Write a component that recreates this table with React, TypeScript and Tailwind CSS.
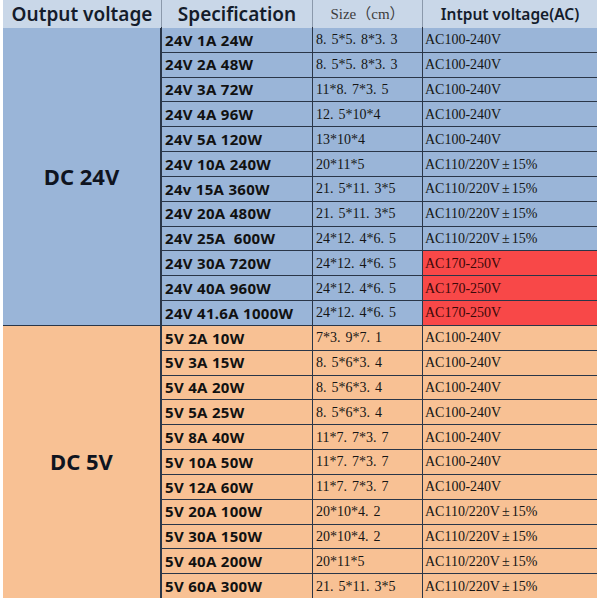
const blueRows = [
  { spec: '24V 1A 24W', size: '8.5*5.8*3.3', input: 'AC100-240V' },
  { spec: '24V 2A 48W', size: '8.5*5.8*3.3', input: 'AC100-240V' },
  { spec: '24V 3A 72W', size: '11*8.7*3.5', input: 'AC100-240V' },
  { spec: '24V 4A 96W', size: '12.5*10*4', input: 'AC100-240V' },
  { spec: '24V 5A 120W', size: '13*10*4', input: 'AC100-240V' },
  { spec: '24V 10A 240W', size: '20*11*5', input: 'AC110/220V±15%' },
  { spec: '24v 15A 360W', size: '21.5*11.3*5', input: 'AC110/220V±15%' },
  { spec: '24V 20A 480W', size: '21.5*11.3*5', input: 'AC110/220V±15%' },
  { spec: '24V 25A  600W', size: '24*12.4*6.5', input: 'AC110/220V±15%' },
  { spec: '24V 30A 720W', size: '24*12.4*6.5', input: 'AC170-250V', red: true },
  { spec: '24V 40A 960W', size: '24*12.4*6.5', input: 'AC170-250V', red: true },
  { spec: '24V 41.6A 1000W', size: '24*12.4*6.5', input: 'AC170-250V', red: true },
];

const orangeRows = [
  { spec: '5V 2A 10W', size: '7*3.9*7.1', input: 'AC100-240V' },
  { spec: '5V 3A 15W', size: '8.5*6*3.4', input: 'AC100-240V' },
  { spec: '5V 4A 20W', size: '8.5*6*3.4', input: 'AC100-240V' },
  { spec: '5V 5A 25W', size: '8.5*6*3.4', input: 'AC100-240V' },
  { spec: '5V 8A 40W', size: '11*7.7*3.7', input: 'AC100-240V' },
  { spec: '5V 10A 50W', size: '11*7.7*3.7', input: 'AC100-240V' },
  { spec: '5V 12A 60W', size: '11*7.7*3.7', input: 'AC100-240V' },
  { spec: '5V 20A 100W', size: '20*10*4.2', input: 'AC110/220V±15%' },
  { spec: '5V 30A 150W', size: '20*10*4.2', input: 'AC110/220V±15%' },
  { spec: '5V 40A 200W', size: '20*11*5', input: 'AC110/220V±15%' },
  { spec: '5V 60A 300W', size: '21.5*11.3*5', input: 'AC110/220V±15%' },
];

const serif = "font-['Liberation_Serif','Noto_Sans_CJK_SC',serif]";
const sans = "font-['Noto_Sans','Liberation_Sans',sans-serif]";

// periods in the source font are wide, so give them room
function Size({ text }: { text: string }) {
  const parts = text.split('.');
  return (
    <span>
      {parts.map((p, i) => (
        <span key={i}>
          {p}
          {i < parts.length - 1 && <span className="mr-[5px]">.</span>}
        </span>
      ))}
    </span>
  );
}

function Input({ text }: { text: string }) {
  if (!text.includes('±')) return <span>{text}</span>;
  const [a, b] = text.split('±');
  return (
    <span>
      {a}
      <span className="mx-[2px]">±</span>
      {b}
    </span>
  );
}

type Row = { spec: string; size: string; input: string; red?: boolean };

function Rows({ rows, bg }: { rows: Row[]; bg: string }) {
  return (
    <>
      {rows.map((r) => (
        <div key={r.spec} className="contents">
          <div className={`${bg} ${sans} flex items-center pl-[3px] text-[15px] tracking-[0.3px] font-bold text-[#111] whitespace-pre`}>
            {r.spec}
          </div>
          <div className={`${bg} ${serif} flex items-center pl-[3px] text-[14px] text-[#151515] whitespace-nowrap`}>
            <Size text={r.size} />
          </div>
          <div
            className={`${r.red ? 'bg-[#f84848] text-[#3b0808]' : `${bg} text-[#151515]`} ${serif} flex items-center pl-[2px] text-[14px] whitespace-nowrap`}
          >
            <Input text={r.input} />
          </div>
        </div>
      ))}
    </>
  );
}

export default function App() {
  return (
    <div className="w-[600px] h-[600px] bg-white pl-[3px] flex flex-col">
      <div className="w-[594px] h-[598px] bg-[#2a3648] border-r border-[#2a3648] flex flex-col">
        {/* header */}
        <div className="grid grid-cols-[158px_150px_109px_174px] gap-x-px bg-[#8b99ab] h-[27px] shrink-0">
          <div className={`bg-[#c9d7e8] ${sans} flex items-center justify-center text-[19px] font-semibold text-[#141c2b]`}>
            Output voltage
          </div>
          <div className={`bg-[#c9d7e8] ${sans} flex items-center justify-center text-[19px] font-semibold text-[#141c2b]`}>
            Specification
          </div>
          <div className={`bg-[#c9d7e8] ${serif} flex items-center justify-center text-[15px] text-[#3c3c3c]`}>
            Size（cm）
          </div>
          <div className={`bg-[#c9d7e8] ${sans} flex items-center justify-center text-[15.5px] font-semibold text-[#141c2b]`}>
            Intput voltage(AC)
          </div>
        </div>

        {/* body */}
        <div className="grid grid-cols-[158px_150px_109px_174px] grid-rows-[repeat(23,minmax(0,1fr))] gap-px pt-px flex-1">
          <div className={`row-span-12 bg-[#9ab5d8] ${sans} flex items-center justify-center text-[22px] font-bold text-[#0f1420] border-r border-[#2a3648]`}>
            DC 24V
          </div>
          <Rows rows={blueRows} bg="bg-[#9ab5d8]" />
          <div className={`row-span-11 bg-[#f8c194] ${sans} flex items-center justify-center text-[22px] font-bold text-[#0f1420] border-r border-[#2a3648]`}>
            DC 5V
          </div>
          <Rows rows={orangeRows} bg="bg-[#f8c194]" />
        </div>
      </div>
    </div>
  );
}
